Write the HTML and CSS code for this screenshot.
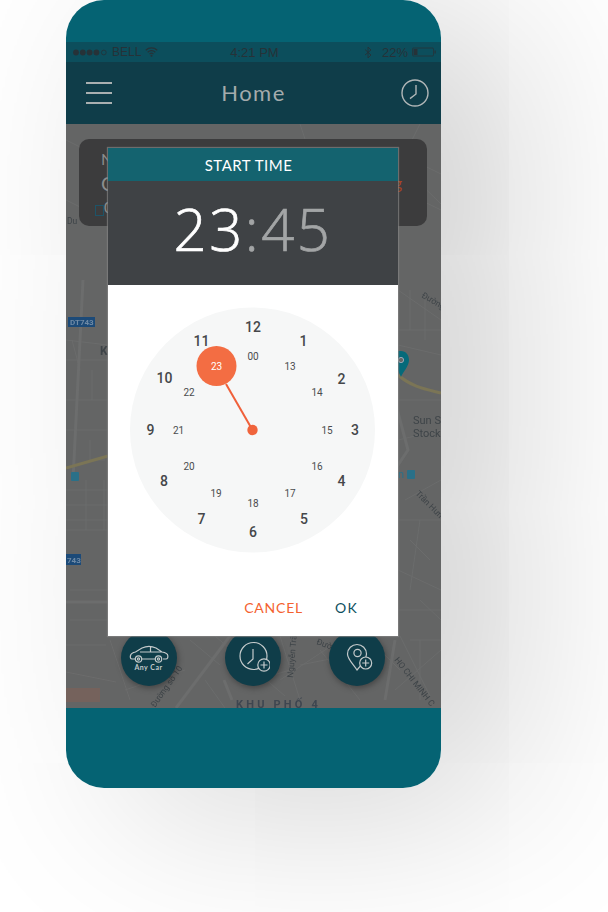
FILE: index.html
```html
<!DOCTYPE html>
<html lang="en">
<head>
<meta charset="utf-8">
<title>Start time</title>
<link rel="stylesheet" href="styles.css">
</head>
<body>
<main class="phone">
  <div class="bezel-top"></div>
  <div class="status">
    <div class="status-left">
      <svg class="signal" width="35" height="7" viewBox="0 0 35 7"><circle cx="3" cy="3.500" r="2.900"/><circle cx="9.800" cy="3.500" r="2.900"/><circle cx="16.600" cy="3.500" r="2.900"/><circle cx="23.400" cy="3.500" r="2.900"/><circle cx="30.800" cy="3.500" r="2.400" class="hollow"/></svg>
      <span>BELL</span>
      <svg class="wifi" width="13" height="10" viewBox="0 0 13 10"><path d="M.8 3.200a8.200 8.200 0 0 1 11.400 0M2.700 5.200a5.400 5.400 0 0 1 7.600 0M4.600 7.100a2.700 2.700 0 0 1 3.800 0"/><circle cx="6.500" cy="8.800" r="1"/></svg>
    </div>
    <span class="status-time">4:21 PM</span>
    <div class="status-right">
      <svg class="bt" width="8" height="13" viewBox="0 0 8 13"><path d="M1 3.500l6 5.500-3 3V1l3 3-6 5"/></svg>
      <span class="pct">22%</span>
      <svg class="batt-i" width="24" height="10" viewBox="0 0 24 10"><rect x=".5" y="1" width="21" height="8" rx="1" class="batt"/><rect x="1.500" y="2" width="4" height="6"/><rect x="22.500" y="3.500" width="1.200" height="3"/></svg>
    </div>
  </div>
  <header class="appbar">
    <div class="burger"><i></i><i></i><i></i></div>
    <h1>Home</h1>
    <svg class="appbar-clock" width="28" height="28" viewBox="0 0 28 28"><circle cx="14" cy="14" r="13"/><path d="M15 6v9l-6 4.600"/></svg>
  </header>
  <section class="map">
    <svg class="map-art" viewBox="66 124 375 584" aria-hidden="true">
      <g class="st">
        <path d="M66 140l60 30 50-30M300 124l20 60 60-40 61 30M420 124l-20 40 41 40M66 200l40 20M400 190l41 20"/>
        <path d="M398 290l43 30M398 330h43M398 345l43 10M398 400h43M398 440l43-10M405 500l36-20M398 520h43M420 520l-10 70M398 570l43 20M398 610h43M410 290v40M425 300v40M410 540l20 20"/>
        <path d="M66 360h42M66 400h42M66 430h42M66 490h42M66 505h42M66 520h42M66 530h42M66 340l42 5M86 480v50M104 480v50M90 440v20h15M70 590h38M70 620h38M72 340l8 30M92 370v30"/>
        <path d="M125 690l60-20M215 636l70 60M300 700l-20-64M340 640l-60 40M395 690l46-40M400 636l30 60M66 645h40M66 672l50 10M420 640v60M410 640h31M420 600l21 20M240 685l50-15M320 650l40 50M190 640l30 25M300 665l60-12M110 640l20 60M205 680l20 28M380 650l20 20M340 680l30-15"/>
      </g>
      <g class="road-w">
        <path d="M83 280l-10 200M396 405l12 45 -20 30 -25 25"/>
        <path d="M66 602h42M176 708l54-72M232 700l-8-20M395 640l-10 60"/>
      </g>
      <path class="road-y" d="M66 468l42-12M398 375c14 12 27 14 43 18"/>
      <rect class="road-p" x="66" y="688" width="34" height="14"/>
      <rect class="shield" x="68" y="317" width="27" height="10"/>
      <rect class="shield" x="66" y="554" width="15" height="11"/>
      <text class="shield-t" x="70" y="325">DT743</text>
      <text class="shield-t" x="67" y="563">743</text>
      <rect class="bus" x="71" y="472" width="8" height="9" rx="1"/>
      <rect class="bus" x="407" y="470" width="8" height="9" rx="1"/>
      <text class="lbl-b" x="398" y="478">n</text>
      <path class="pin" d="M398 351h3c5 0 8 4 8 9 0 6-6 12-8 17-2-4-3-7-3-7z"/>
      <circle class="pin-h" cx="401" cy="360" r="2.600"/>
      <text class="lbl" x="413" y="424">Sun S</text>
      <text class="lbl" x="413" y="437">Stock</text>
      <text class="lbl lbl-k" x="100" y="355">K</text>
      <text class="lbl-s" x="67" y="224">Du</text>
      <text class="lbl-s" transform="translate(421 297) rotate(30)">Đường</text>
      <text class="lbl-s" transform="translate(415 494) rotate(45)">Trần Hưn</text>
      <text class="lbl-s" transform="translate(394 660) rotate(52)">HO CHI MINH C</text>
      <text class="lbl-s" transform="translate(155 708) rotate(-55)">Đường số 10</text>
      <text class="lbl-s" transform="translate(293 678) rotate(-85)">Nguyễn Trã</text>
      <text class="lbl-s" transform="translate(316 644) rotate(20)">Đườ</text>
      <text class="khu" x="236" y="708">KHU PHỐ 4</text>
    </svg>
    <div class="card">
      <div class="card-n">N</div>
      <div class="card-c"><span>C</span><span class="card-g">g</span></div>
      <div class="card-o"><i class="card-bus"></i><span>0</span></div>
    </div>
    <div class="fabs">
      <button class="fab" type="button">
        <svg width="40" height="30" viewBox="0 0 40 30"><path d="M6 16H3c-1.500 0-2-1.500-1.500-3.500C2 10.500 4 9.500 6.500 9L13 5c4-1.800 10-1.800 14 0l6 4c3 .5 5.500 1.500 5.800 3.500.3 2-.3 3.500-1.800 3.500h-3M13 16h13M11 9h22M21.500 4v5"/><circle cx="9.500" cy="16" r="3.200"/><circle cx="9.500" cy="16" r="1.100"/><circle cx="29.500" cy="16" r="3.200"/><circle cx="29.500" cy="16" r="1.100"/><text x="19.500" y="27">Any Car</text></svg>
      </button>
      <button class="fab" type="button">
        <svg width="34" height="34" viewBox="0 0 34 34"><circle cx="17.500" cy="15" r="13.500"/><path d="M17 8v10l-5.500 5"/><circle class="mini" cx="28" cy="24" r="6.200"/><path d="M28 20.500v7M24.500 24h7"/></svg>
      </button>
      <button class="fab" type="button">
        <svg width="34" height="34" viewBox="0 0 34 34"><path d="M17 29C13 23 7.500 18 7.500 13a9.500 9.500 0 0 1 19 0c0 5-5 11-9.500 16z"/><circle cx="17.500" cy="12" r="3.600"/><circle class="mini" cx="25.700" cy="22" r="6"/><path d="M25.700 18.500v7M22.200 22h7"/></svg>
      </button>
    </div>
  </section>
  <div class="bezel-bottom"></div>

  <section class="dialog" role="dialog" aria-label="Start time">
    <h2 class="dialog-title">START TIME</h2>
    <div class="dialog-time"><span class="t-on">23</span><span class="t-off">:45</span></div>
    <div class="dialog-body">
      <svg class="clock" viewBox="108 285 290 280" aria-label="Clock face">
        <circle class="face" cx="252.500" cy="430" r="122.500"/>
        <path class="hand" d="M226 384l26.500 46"/>
        <circle class="dot" cx="252.500" cy="430" r="5.200"/>
        <circle class="sel" cx="216.500" cy="366" r="20"/>
        <g class="hrs">
          <text x="253" y="332">12</text><text x="303.500" y="346">1</text><text x="341.500" y="384">2</text><text x="355" y="435">3</text><text x="341.500" y="486">4</text><text x="304" y="524">5</text><text x="253" y="537">6</text><text x="201.500" y="524">7</text><text x="164" y="486">8</text><text x="150.500" y="435">9</text><text x="164.500" y="383">10</text><text x="201.500" y="346">11</text>
        </g>
        <g class="mins">
          <text x="253" y="360">00</text><text x="290" y="370">13</text><text x="317" y="396">14</text><text x="327" y="434">15</text><text x="317" y="470">16</text><text x="290" y="497">17</text><text x="253" y="507">18</text><text x="216" y="497">19</text><text x="189" y="470">20</text><text x="178.500" y="434">21</text><text x="189" y="396">22</text>
          <text class="sel-t" x="216.500" y="370">23</text>
        </g>
      </svg>
      <div class="actions"><span class="cancel">CANCEL</span><span class="ok">OK</span></div>
    </div>
  </section>
</main>
</body>
</html>
```
FILE: styles.css
```css
html, body { margin: 0; padding: 0; background: #fff; }
body { width: 608px; height: 912px; overflow: hidden; font-family: "Lato", "Noto Sans", sans-serif; }

.phone {
  position: relative;
  width: 375px;
  height: 788px;
  margin-left: 66px;
  display: flex;
  flex-direction: column;
  border-radius: 38px;
  overflow: hidden;
  box-shadow: 68px 14px 190px rgba(0,0,0,.2);
}
.bezel-top { height: 42px; background: #056373; flex: none; }
.bezel-bottom { height: 80px; background: #056373; flex: none; }

.status {
  height: 20px;
  flex: none;
  background: #0c4e5c;
  color: #263238;
  font-size: 12px;
  font-family: "Liberation Sans", sans-serif;
  display: flex;
  align-items: center;
  justify-content: space-between;
  padding: 0 5px 0 7px;
}
.status-left, .status-right { display: flex; align-items: center; gap: 4px; width: 110px; }
.status-right { justify-content: flex-end; }
.pct { margin-left: 6px; font-size: 13px; }
.status-time { font-size: 13px; }
.status svg { fill: #263238; flex: none; }
.signal .hollow { fill: none; stroke: #263238; stroke-width: .8; }
.wifi path { fill: none; stroke: #263238; stroke-width: 1.3; }
.bt path { fill: none; stroke: #263238; stroke-width: .9; }
.batt { fill: none; stroke: #263238; stroke-width: .8; }

.appbar {
  height: 62px;
  flex: none;
  background: #0f3d49;
  display: flex;
  align-items: center;
  justify-content: space-between;
  padding: 0 12px 0 20px;
  box-sizing: border-box;
}
.appbar h1 {
  margin: 0 6px 2px 0;
  font-size: 22px;
  font-weight: 400;
  letter-spacing: 1.5px;
  color: #a4abac;
}
.burger { display: flex; flex-direction: column; gap: 8px; width: 26px; }
.burger i { display: block; height: 2px; background: #a9b0b1; }
.appbar-clock { fill: none; stroke: #b0b6b7; stroke-width: 1.4; }

.map {
  position: relative;
  flex: 1;
  min-height: 0;
  background: #646565;
  display: flex;
  flex-direction: column;
  justify-content: space-between;
  padding: 15px 14px 22px 13px;
  overflow: hidden;
}
.map-art { position: absolute; left: 0; top: 0; width: 375px; height: 584px; filter: blur(.5px); }
.st { fill: none; stroke: #6b6c6c; stroke-width: 1; }
.road-w { fill: none; stroke: #6c6d6d; stroke-width: 3; }
.road-y { fill: none; stroke: #7b7556; stroke-width: 3; }
.road-p { fill: #75625c; }
.shield { fill: #1c4a78; }
.shield-t { font: 700 8px "Roboto", sans-serif; fill: #6f8aa5; }
.bus { fill: #2a7088; }
.pin { fill: #056a7a; }
.pin-h { fill: #646565; stroke: #9ab; stroke-width: 1; }
.lbl { font: 400 11px "Roboto", sans-serif; fill: #3e4448; }
.lbl-k { font-weight: 700; font-size: 12px; }
.lbl-b { font: 400 11px "Roboto", sans-serif; fill: #2a7088; }
.lbl-s { font: 400 8.500px "Roboto", sans-serif; fill: #3e4448; }
.khu { font: 700 11px "Roboto", sans-serif; letter-spacing: 3.200px; fill: #3e4650; }

.card {
  position: relative;
  height: 87px;
  box-sizing: border-box;
  padding: 10px 25px 0 22px;
  background: #3c3c3d;
  border-radius: 10px;
  flex: none;
  color: #8b8d8e;
  display: flex;
  flex-direction: column;
  gap: 2px;
}
.card-n { font-size: 16px; line-height: 20px; }
.card-c { font-size: 20px; line-height: 24px; display: flex; justify-content: space-between; }
.card-g { font-size: 16px; color: #a8431f; }
.card-o { font-size: 15px; line-height: 20px; display: flex; align-items: center; margin-left: -6px; }
.card-bus { width: 7px; height: 9px; border: 1px solid #1d5468; margin-top: 6px; }

.fabs { position: relative; display: flex; gap: 48px; padding-left: 42px; }
.fab {
  width: 56px;
  height: 56px;
  padding: 0;
  border: 0;
  border-radius: 50%;
  background: #0f3d49;
  box-shadow: 1px 2px 6px rgba(0,0,0,.35);
  display: flex;
  align-items: center;
  justify-content: center;
}
.fab svg { fill: none; stroke: #c4cacb; stroke-width: 1.200; }
.fab .mini { fill: #0f3d49; }
.fab text { font: 700 7px "Lato", sans-serif; fill: #c4cacb; stroke: none; text-anchor: middle; letter-spacing: .5px; }

.dialog {
  position: absolute;
  left: 42px;
  top: 148px;
  width: 290px;
  height: 488px;
  display: flex;
  flex-direction: column;
  box-shadow: 0 0 1px 1px rgba(130,130,130,.7);
}
.dialog-title {
  margin: 0;
  height: 33px;
  box-sizing: border-box;
  padding-right: 9px;
  flex: none;
  background: #14636f;
  color: #fff;
  font-size: 15px;
  font-weight: 400;
  letter-spacing: .5px;
  line-height: 34px;
  text-align: center;
}
.dialog-time {
  height: 104px;
  flex: none;
  background: #3f4245;
  font-family: "Open Sans", sans-serif;
  font-size: 58px;
  font-weight: 300;
  -webkit-text-stroke: .7px;
  line-height: 96px;
  text-align: center;
  box-sizing: border-box;
  letter-spacing: 2.500px;
}
.t-on { color: #fff; }
.t-off { color: #a3a5a6; }
.dialog-body { flex: 1; background: #fff; display: flex; flex-direction: column; min-height: 0; }
.clock { display: block; width: 290px; height: 280px; flex: none; }
.face { fill: #f6f7f7; }
.hand { stroke: #f0603a; stroke-width: 2; fill: none; }
.dot { fill: #f0643c; }
.sel { fill: #f36d43; }
.hrs text { font: 500 14px "Roboto", sans-serif; fill: #45474a; text-anchor: middle; }
.mins text { font: 400 10px "Roboto", sans-serif; fill: #4a4c4e; text-anchor: middle; }
.mins .sel-t { fill: #fff; }
.actions {
  display: flex;
  justify-content: flex-end;
  gap: 32px;
  padding: 34px 40px 0 0;
  font-size: 14px;
  letter-spacing: .8px;
  line-height: 17px;
}
.cancel { color: #f4622f; }
.ok { color: #0d4f5e; letter-spacing: 1.200px; }
```
